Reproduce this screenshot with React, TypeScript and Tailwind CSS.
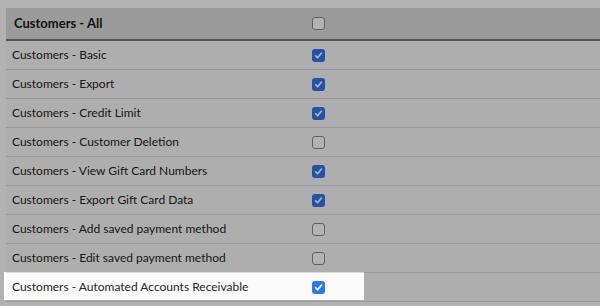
import React from 'react';

const rows = [
  { label: 'Customers - Basic', checked: true },
  { label: 'Customers - Export', checked: true },
  { label: 'Customers - Credit Limit', checked: true },
  { label: 'Customers - Customer Deletion', checked: false },
  { label: 'Customers - View Gift Card Numbers', checked: true },
  { label: 'Customers - Export Gift Card Data', checked: true },
  { label: 'Customers - Add saved payment method', checked: false },
  { label: 'Customers - Edit saved payment method', checked: false },
  { label: 'Customers - Automated Accounts Receivable', checked: true },
];

const Checkbox = ({ checked }: { checked: boolean }) =>
  checked ? (
    <span className="w-[13px] h-[13px] rounded-[3px] bg-[#2f78f2] flex items-center justify-center">
      <svg width="9" height="9" viewBox="0 0 10 10">
        <path d="M1.8 5.3 L4 7.5 L8.3 2.3" fill="none" stroke="white" strokeWidth="1.9" strokeLinecap="round" strokeLinejoin="round" />
      </svg>
    </span>
  ) : (
    <span className="w-[13px] h-[13px] rounded-[3px] bg-white border border-[#8d8d8d]"></span>
  );

const App = () => {
  return (
    <div className="relative w-[600px] h-[306px] overflow-hidden bg-white pt-[8px] pl-[6px] font-['Lato','Liberation_Sans',sans-serif] text-[#262626]">
      <div className="w-full">
        <div className="h-[33px] bg-[#dedede] border-b-2 border-[#787878] flex items-center">
          <span className="w-[306px] pl-[8px] text-[13px] font-bold text-[#1a1a1a]">Customers - All</span>
          <Checkbox checked={false} />
        </div>
        {rows.map((r) => (
          <div key={r.label} className="h-[29px] bg-[#fafafa] border-b border-[#dcdcdc] flex items-center">
            <span className="w-[306px] pl-[6px] text-[12px]">{r.label}</span>
            <Checkbox checked={r.checked} />
          </div>
        ))}
      </div>
      {/* spotlight on the last row */}
      <div className="absolute left-[4px] top-[272px] w-[360px] h-[28px] shadow-[0_0_0_2000px_rgba(0,0,0,0.3)]"></div>
    </div>
  );
};

export default App;
